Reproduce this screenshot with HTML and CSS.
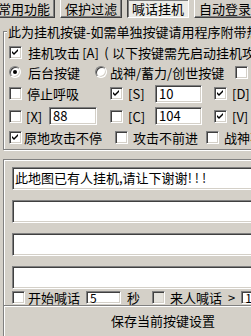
FILE: index.html
```html
<!DOCTYPE html>
<html lang="zh-CN">
<head>
  <meta charset="UTF-8">
  <title>喊话挂机</title>
  <link rel="stylesheet" href="styles.css">
</head>
<body>
  <div class="tabs">
    <div class="tab">常用功能</div>
    <div class="tab">保护过滤</div>
    <div class="tab active">喊话挂机</div>
    <div class="tab">自动登录</div>
  </div>

  <div class="group">
    <div class="legend">此为挂机按键-如需单独按键请用程序附带热键</div>
    <div class="rows">
      <div class="row r1">
        <div class="opt">
          <span class="chk"><svg viewBox="0 0 9 9" width="9" height="9"><path d="M1 3l2 2 4-4v2l-4 4-2-2z"/></svg></span>
          <span class="t6">挂机攻击<span class="half">[A]</span><span class="paren">(</span>以下按键需先启动挂机攻击)</span>
        </div>
      </div>

      <div class="row r2">
        <div class="opt w86">
          <span class="radio"><span class="dot"></span></span>
          <span class="t7">后台按键</span>
        </div>
        <div class="opt w140">
          <span class="radio"></span>
          <span class="t3">战神/蓄力/创世按键</span>
        </div>
        <div class="opt">
          <span class="chk"></span>
          <span class="t5">关闭</span>
        </div>
      </div>

      <div class="row r3">
        <div class="opt w101">
          <span class="chk"></span>
          <span class="t5">停止呼吸</span>
        </div>
        <div class="opt w104">
          <span class="chk"><svg viewBox="0 0 9 9" width="9" height="9"><path d="M1 3l2 2 4-4v2l-4 4-2-2z"/></svg></span>
          <span class="t5 key">[S]</span>
          <span class="edit small">10</span>
        </div>
        <div class="opt">
          <span class="chk"><svg viewBox="0 0 9 9" width="9" height="9"><path d="M1 3l2 2 4-4v2l-4 4-2-2z"/></svg></span>
          <span class="t5">[D]</span>
        </div>
      </div>

      <div class="row r4">
        <div class="opt w101">
          <span class="chk"></span>
          <span class="t4 key narrow">[X]</span>
          <span class="edit small wide">88</span>
        </div>
        <div class="opt w104">
          <span class="chk"></span>
          <span class="t5 key">[C]</span>
          <span class="edit small">104</span>
        </div>
        <div class="opt">
          <span class="chk"><svg viewBox="0 0 9 9" width="9" height="9"><path d="M1 3l2 2 4-4v2l-4 4-2-2z"/></svg></span>
          <span class="t5">[V]</span>
        </div>
      </div>

      <div class="row r5">
        <div class="opt w106">
          <span class="chk"><svg viewBox="0 0 9 9" width="9" height="9"><path d="M1 3l2 2 4-4v2l-4 4-2-2z"/></svg></span>
          <span class="t2">原地攻击不停</span>
        </div>
        <div class="opt w91">
          <span class="chk"></span>
          <span class="t5">攻击不前进</span>
        </div>
        <div class="opt">
          <span class="chk"></span>
          <span class="t5">战神不前进</span>
        </div>
      </div>
    </div>
  </div>

  <div class="panel">
    <div class="edit line">此地图已有人挂机,请让下谢谢<span class="bang">!!!</span></div>
    <div class="edit line"></div>
    <div class="edit line"></div>
    <div class="edit line"></div>

    <div class="row shout">
      <span class="chk"></span>
      <span class="t3">开始喊话</span>
      <span class="edit tiny">5</span>
      <span class="t6">秒</span>
      <span class="chk off"></span>
      <span class="t5">来人喊话</span>
      <span class="t6">&gt;</span>
      <span class="edit tiny last">1</span>
    </div>
  </div>

  <div class="save">保存当前按键设置</div>
</body>
</html>
```

FILE: styles.css
```css
body {
  margin: 0;
  width: 251px;
  height: 336px;
  overflow: hidden;
  background-color: #d4d0c8;
  font-family: "Noto Sans CJK SC", "DejaVu Sans", sans-serif;
  font-size: 13px;
  line-height: 15px;
  color: #000;
}

/* tab buttons */
.tabs {
  display: flex;
  gap: 5px;
  margin: -1px 0 0 -7px;
  height: 19px;
}

.tab {
  flex: none;
  width: 62px;
  height: 19px;
  box-sizing: border-box;
  border: 1px solid;
  border-color: #fff #404040 #404040 #fff;
  box-shadow: inset -1px -1px 0 #808080;
  text-align: center;
  line-height: 18px;
}

.tab.active {
  background-color: #ecebe7;
  border-color: #404040 #fff #fff #404040;
  box-shadow: inset 1px 1px 0 #808080;
}

/* group box */
.group {
  width: 320px;
  margin: 13px 0 0 3px;
  border: 1px solid #808080;
  box-shadow: inset 1px 1px 0 #fff, 1px 1px 0 #fff;
}

.legend {
  width: fit-content;
  margin: -8px 0 0 3px;
  padding: 0 1px;
  background-color: #d4d0c8;
  white-space: nowrap;
}

.rows {
  padding: 3px 0 2px 5px;
}

.row {
  display: flex;
  align-items: center;
  white-space: nowrap;
}

.r1, .r2, .r5 { height: 20px; }
.r3 { height: 23px; }
.r4 { height: 22px; }

.opt {
  flex: none;
  display: flex;
  align-items: center;
}

.w86 { width: 86px; }
.w91 { width: 91px; }
.w101 { width: 101px; }
.w104 { width: 104px; }
.w106 { width: 106px; }
.w140 { width: 140px; }

.t2 { margin-left: 2px; }
.t3 { margin-left: 3px; }
.t4 { margin-left: 4px; }
.t5 { margin-left: 5px; }
.t6 { margin-left: 6px; }
.t7 { margin-left: 7px; }

.half {
  display: inline-block;
  width: 21px;
  text-align: center;
}

.paren {
  display: inline-block;
  width: 11px;
  text-align: center;
}

.bang {
  letter-spacing: 3px;
}

.key {
  width: 22px;
}

.key.narrow {
  width: 19px;
}

/* classic sunken controls */
.chk, .edit, .radio {
  box-sizing: border-box;
  background-color: #fff;
  border: 1px solid;
  border-color: #808080 #fff #fff #808080;
  box-shadow: inset 1px 1px 0 #404040, inset -1px -1px 0 #d4d0c8;
}

.chk {
  flex: none;
  width: 13px;
  height: 13px;
  display: flex;
  align-items: center;
  justify-content: center;
}

.chk.off {
  margin-left: 12px;
  background-color: #e4e2dc;
}

.radio {
  flex: none;
  width: 12px;
  height: 12px;
  border-radius: 50%;
  display: flex;
  align-items: center;
  justify-content: center;
}

.dot {
  width: 4px;
  height: 4px;
  border-radius: 50%;
  background-color: #000;
}

.edit {
  display: block;
  padding: 0 3px;
  line-height: 14px;
}

.edit.small {
  flex: none;
  width: 47px;
  height: 18px;
  margin-left: 5px;
  padding: 1px 3px;
}

.edit.small.wide {
  width: 48px;
  margin-left: 4px;
}

/* shout panel */
.panel {
  width: 320px;
  margin: 9px 0 0 3px;
  padding: 7px 0 0 8px;
  box-sizing: border-box;
  border-top: 1px solid #808080;
  border-left: 1px solid #808080;
  border-bottom: 1px solid #808080;
  box-shadow: inset 1px 1px 0 #fff;
}

.edit.line {
  height: 23px;
  margin-bottom: 10px;
  padding: 3px 2px;
}

.edit.line:nth-of-type(4) {
  margin-bottom: 1px;
}

.shout {
  height: 14px;
  padding-bottom: 1px;
}

.edit.tiny {
  flex: none;
  width: 35px;
  height: 13px;
  margin-left: 6px;
  padding: 0 3px;
  line-height: 11px;
  font-size: 12px;
}

.edit.tiny.last {
  margin-left: 6px;
}

.save {
  width: 318px;
  height: 30px;
  margin-left: 3px;
  border-left: 1px solid #808080;
  box-shadow: inset 1px 1px 0 #fff;
  text-align: center;
  line-height: 30px;
}
```
